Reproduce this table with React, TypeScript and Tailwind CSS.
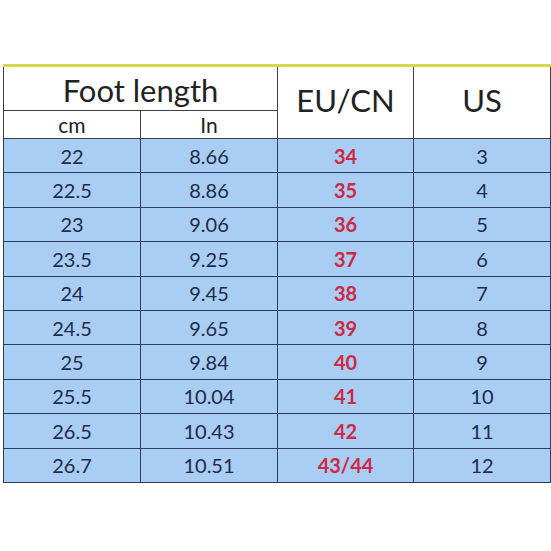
const rows: [string, string, string, string][] = [
  ['22', '8.66', '34', '3'],
  ['22.5', '8.86', '35', '4'],
  ['23', '9.06', '36', '5'],
  ['23.5', '9.25', '37', '6'],
  ['24', '9.45', '38', '7'],
  ['24.5', '9.65', '39', '8'],
  ['25', '9.84', '40', '9'],
  ['25.5', '10.04', '41', '10'],
  ['26.5', '10.43', '42', '11'],
  ['26.7', '10.51', '43/44', '12'],
];

export default function App() {
  return (
    <div
      className="w-[551px] h-[551px] bg-white pt-[64px] pl-[3px]"
      style={{ fontFamily: 'Lato, "Open Sans", sans-serif' }}
    >
      <table className="w-[547px] border-collapse table-fixed border-t-[3px] border-t-[#d3d84c]">
        <colgroup>
          <col className="w-[137px]" />
          <col className="w-[137px]" />
          <col className="w-[136px]" />
          <col className="w-[137px]" />
        </colgroup>
        <thead>
          <tr className="h-[45px]">
            <th
              colSpan={2}
              className="border border-[#3a3f4a] border-t-0 font-normal text-[31px] text-[#222] leading-none pt-[3px]"
            >
              Foot length
            </th>
            <th
              rowSpan={2}
              className="border border-[#3a3f4a] border-t-0 font-normal text-[31px] text-[#222] leading-none pb-[4px]"
            >
              EU/CN
            </th>
            <th
              rowSpan={2}
              className="border border-[#3a3f4a] border-t-0 font-normal text-[31px] text-[#222] leading-none pb-[4px]"
            >
              US
            </th>
          </tr>
          <tr className="h-[28px]">
            <th className="border border-[#3a3f4a] font-normal text-[21px] text-[#222] leading-none">cm</th>
            <th className="border border-[#3a3f4a] font-normal text-[21px] text-[#222] leading-none">In</th>
          </tr>
        </thead>
        <tbody>
          {rows.map(([cm, inch, eu, us]) => (
            <tr key={cm} className="h-[34.4px] bg-[#a9cdf3] text-[20px] leading-none text-[#1e2b4a]">
              <td className="border border-[#2c3d5c] text-center">{cm}</td>
              <td className="border border-[#2c3d5c] text-center">{inch}</td>
              <td className="border border-[#2c3d5c] text-center font-bold text-[#cc2a45]">{eu}</td>
              <td className="border border-[#2c3d5c] text-center">{us}</td>
            </tr>
          ))}
        </tbody>
      </table>
    </div>
  );
}
